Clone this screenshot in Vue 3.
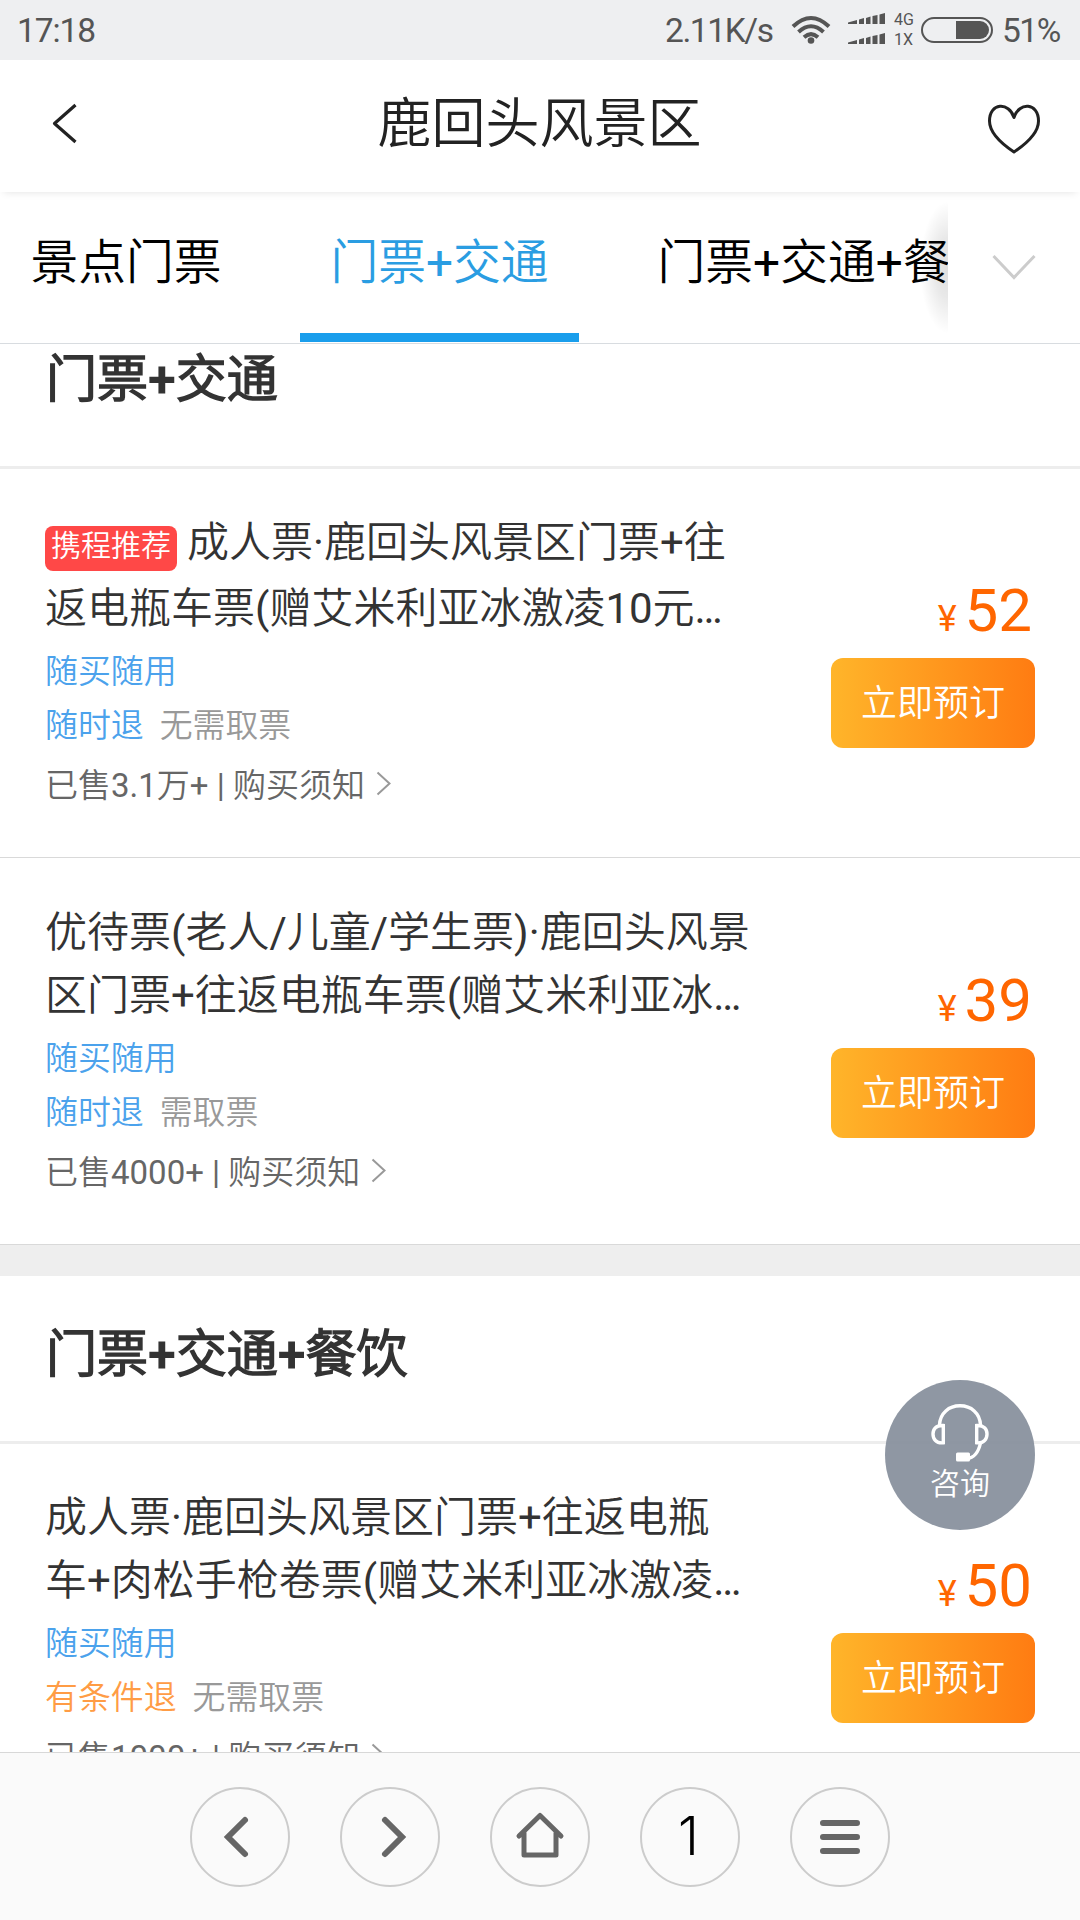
<script setup>
const tabs = [
  { label: '景点门票', active: false },
  { label: '门票+交通', active: true },
  { label: '门票+交通+餐饮', active: false },
]

const sections = [
  {
    title: '门票+交通',
    items: [
      {
        badge: '携程推荐',
        lines: ['成人票·鹿回头风景区门票+往', '返电瓶车票(赠艾米利亚冰激凌10元…'],
        refund: '随时退',
        conditional: false,
        pickup: '无需取票',
        sold: '已售3.1万+',
        price: 52,
      },
      {
        lines: ['优待票(老人/儿童/学生票)·鹿回头风景', '区门票+往返电瓶车票(赠艾米利亚冰…'],
        refund: '随时退',
        conditional: false,
        pickup: '需取票',
        sold: '已售4000+',
        price: 39,
      },
    ],
  },
  {
    title: '门票+交通+餐饮',
    items: [
      {
        lines: ['成人票·鹿回头风景区门票+往返电瓶', '车+肉松手枪卷票(赠艾米利亚冰激凌…'],
        refund: '有条件退',
        conditional: true,
        pickup: '无需取票',
        sold: '已售1000+',
        price: 50,
      },
    ],
  },
]
</script>

<template>
  <div class="screen">
    <div class="status">
      <span class="clock">17:18</span>
      <span class="speed">2.11K/s</span>
      <svg class="wifi" width="40" height="30" viewBox="0 0 40 30" fill="none" stroke="#555" stroke-width="4">
        <path d="M2 11.5Q20-5.5 38 11.5" />
        <path d="M7.5 17Q20 5.5 32.500 17" />
        <path d="M13 22.200Q20 16 27 22.200" />
        <circle cx="20" cy="25.500" r="3.300" fill="#555" stroke="none" />
      </svg>
      <svg class="signal" width="38" height="34" viewBox="0 0 38 34" fill="#555">
        <path d="M0 11v-1.500L9 7v4zM11 11V6.500L16 5v6zM18 11V5l4.500-1.500V11zM24.500 11V3L29.500 2v9zM31.500 11V1.500L37 0v11z" />
        <path transform="translate(0 20)" d="M0 11v-1.500L9 7v4zM11 11V6.500L16 5v6zM18 11V5l4.500-1.500V11zM24.500 11V3L29.500 2v9zM31.500 11V1.500L37 0v11z" />
      </svg>
      <div class="net"><span>4G</span><span>1X</span></div>
      <svg width="72" height="26" viewBox="0 0 72 26">
        <rect x="1" y="1" width="70" height="24" rx="12" fill="none" stroke="#555" stroke-width="2" />
        <path d="M35 4h24a9 9 0 0 1 0 18H35z" fill="#555" />
      </svg>
      <span class="percent">51%</span>
    </div>

    <header class="header">
      <svg class="back" width="26" height="42" viewBox="0 0 26 42" fill="none" stroke="#222" stroke-width="3.200" stroke-linejoin="round">
        <path d="M24.500 2L3.500 20.500L24.500 39" />
      </svg>
      <h1>鹿回头风景区</h1>
      <svg class="heart" width="54" height="50" viewBox="0 0 54 50" fill="none" stroke="#222" stroke-width="3" stroke-linejoin="round">
        <path d="M27 13.500C22-2.500 2.500-1.500 2.500 17C2.500 29 15 40 27 48C39 40 51.500 29 51.500 17C51.500-1.500 32-2.500 27 13.500Z" />
      </svg>
    </header>

    <nav class="tabs">
      <div class="tab-track">
        <div v-for="t in tabs" :key="t.label" class="tab" :class="{ active: t.active }">{{ t.label }}</div>
      </div>
      <div class="more">
        <svg width="44" height="28" viewBox="0 0 44 28" fill="none" stroke="#ccc" stroke-width="3">
          <path d="M1.500 2L22 23.500L42.500 2" />
        </svg>
      </div>
    </nav>

    <main class="scroller">
      <section v-for="s in sections" :key="s.title" class="section">
        <h2>{{ s.title }}</h2>
        <article v-for="item in s.items" :key="item.price" class="item" :class="{ tall: item.badge }">
          <div class="info">
            <p class="line">
              <span v-if="item.badge" class="badge">{{ item.badge }}</span><span>{{ item.lines[0] }}</span>
            </p>
            <p class="line">{{ item.lines[1] }}</p>
            <div class="facts">
              <div class="tags"><span class="blue">随买随用</span></div>
              <div class="tags">
                <span :class="item.conditional ? 'orange' : 'blue'">{{ item.refund }}</span>
                <span class="gray">{{ item.pickup }}</span>
              </div>
            </div>
            <div class="sold">
              <span>{{ item.sold }} | 购买须知</span>
              <svg width="16" height="25" viewBox="0 0 16 25" fill="none" stroke="#999" stroke-width="2">
                <path d="M1.500 1.500L13.500 12.500L1.500 23.500" />
              </svg>
            </div>
          </div>
          <div class="buy">
            <div class="price"><span class="yen">¥</span><span>{{ item.price }}</span></div>
            <button class="book">立即预订</button>
          </div>
        </article>
      </section>
    </main>

    <div class="fab">
      <svg width="58" height="58" viewBox="0 0 58 58" fill="none" stroke="#fff" stroke-width="3.400">
        <path d="M8.500 21C9 9 18 1.800 29 1.800S49 9 49.500 21" />
        <path d="M12.300 21.500v17.300C5 39.500 2 35 2 30S5 21 12.300 21.500Z" />
        <path d="M45.700 21.500v17.300C53 39.500 56 35 56 30S53 21 45.700 21.500Z" />
        <path d="M49.500 39C47.500 48 43 54 36 54.500" />
        <rect x="25" y="48.500" width="14" height="9" rx="1.500" fill="#fff" stroke="none" />
      </svg>
      <span>咨询</span>
    </div>

    <footer class="toolbar">
      <div class="circle">
        <svg width="100" height="100" viewBox="0 0 100 100" fill="none" stroke="#666" stroke-width="6" stroke-linecap="round">
          <path d="M55 33L38 50L55 67" />
        </svg>
      </div>
      <div class="circle">
        <svg width="100" height="100" viewBox="0 0 100 100" fill="none" stroke="#666" stroke-width="6" stroke-linecap="round">
          <path d="M45 33L62 50L45 67" />
        </svg>
      </div>
      <div class="circle">
        <svg width="100" height="100" viewBox="0 0 100 100" fill="none" stroke="#666" stroke-width="5" stroke-linecap="round" stroke-linejoin="round">
          <path d="M29 49L50 28.500L71 49M34 46V68H66V46" />
        </svg>
      </div>
      <div class="circle"><span class="count">1</span></div>
      <div class="circle">
        <svg width="100" height="100" viewBox="0 0 100 100" fill="none" stroke="#666" stroke-width="6" stroke-linecap="round">
          <path d="M33 36H67M33 50H67M33 64H67" />
        </svg>
      </div>
    </footer>
  </div>
</template>

<style>
body {
  margin: 0;
}
</style>

<style scoped>
.screen {
  position: relative;
  display: flex;
  flex-direction: column;
  width: 1080px;
  height: 1920px;
  overflow: hidden;
  background: #fff;
  color: #333;
  font-family: Roboto, "Noto Sans CJK SC DemiLight", "Noto Sans CJK SC", sans-serif;
  font-weight: 400;
}
.screen * {
  box-sizing: border-box;
}
svg {
  display: block;
  flex: none;
}
h1,
h2,
p {
  margin: 0;
}

.status {
  display: flex;
  flex: none;
  align-items: center;
  height: 60px;
  padding: 0 17px;
  background: #eeeff1;
  color: #555;
  font-size: 33.500px;
  font-weight: 400;
  white-space: nowrap;
}
.clock {
  flex: 1;
  letter-spacing: -1.100px;
}
.speed {
  width: 110px;
  margin-right: 16px;
  letter-spacing: -1.400px;
}
.wifi {
  margin-right: 17px;
}
.signal {
  margin-right: 8px;
}
.net {
  display: flex;
  flex-direction: column;
  width: 25px;
  margin-right: 2px;
  font-size: 16px;
  line-height: 20px;
}
.percent {
  width: 61px;
  margin-left: 9px;
  letter-spacing: -1.500px;
}

.header {
  position: relative;
  z-index: 1;
  display: flex;
  flex: none;
  align-items: center;
  justify-content: space-between;
  height: 132px;
  padding: 0 39px 0 51px;
  box-shadow: 0 4px 8px -4px rgba(0, 0, 0, 0.12);
}
.back {
  margin-bottom: 4px;
}
.heart {
  margin-top: 5px;
}
.header h1 {
  margin-left: 15px;
  padding-bottom: 14px;
  color: #222;
  font-size: 54px;
  font-weight: 400;
}

.tabs {
  display: flex;
  flex: none;
  height: 152px;
  border-bottom: 1px solid #d8dce0;
}
.tab-track {
  display: flex;
  flex: 1;
  gap: 48px;
  min-width: 0;
  overflow: hidden;
}
.tab {
  flex: none;
  height: 150px;
  padding: 0 30.500px;
  color: #000;
  font-size: 47.750px;
  line-height: 143px;
  white-space: nowrap;
}
.tab.active {
  border-bottom: 9px solid #1a9eec;
  color: #2a9de2;
}
.more {
  position: relative;
  display: flex;
  align-items: center;
  justify-content: center;
  width: 132px;
  background: #fff;
}
.more::before {
  content: "";
  position: absolute;
  top: 8px;
  bottom: 8px;
  left: -30px;
  width: 30px;
  background: radial-gradient(ellipse 28px 66px at 100% 50%, rgba(0, 0, 0, 0.13), rgba(0, 0, 0, 0.09) 45%, rgba(0, 0, 0, 0));
}

.scroller {
  flex: 1;
  min-height: 0;
  overflow: hidden;
}
.section + .section {
  border-top: 31px solid #eee;
}
.section:first-child {
  margin-top: -43px;
}
h2 {
  height: 168px;
  padding: 0 46px;
  border-bottom: 3px solid #ededed;
  font-size: 51px;
  font-weight: 700;
  line-height: 157px;
}
.item {
  display: flex;
  justify-content: space-between;
  height: 387px;
  padding: 38px 45px 0;
  border-bottom: 1px solid #d9d9d9;
}
.item.tall {
  height: 389px;
}
.item + .item {
  padding-top: 39px;
}
.info {
  min-width: 0;
}
.line {
  display: flex;
  align-items: center;
  height: 63px;
  font-size: 42px;
  white-space: nowrap;
}
.tall .line:first-child {
  height: 66px;
}
.badge {
  height: 45px;
  margin: 17px 10px 0 0;
  padding: 0 6px;
  border-radius: 8px;
  background: #ff4847;
  color: #fff;
  font-size: 30px;
  line-height: 39px;
}
.badge + span {
  padding-bottom: 4px;
}
.facts {
  margin-top: 6px;
}
.tags {
  display: flex;
  gap: 16px;
  height: 54px;
  font-size: 32.900px;
  line-height: 60px;
}
.blue {
  color: #4ba2ec;
}
.orange {
  color: #ff9c45;
}
.gray {
  color: #999;
}
.sold {
  display: flex;
  align-items: center;
  gap: 11px;
  height: 66px;
  color: #666;
  font-size: 33px;
}
.buy {
  display: flex;
  flex-direction: column;
  align-items: flex-end;
  padding-top: 61px;
}
.price {
  display: flex;
  align-items: baseline;
  gap: 8px;
  height: 90px;
  padding-right: 3px;
  color: #ff6600;
  font-size: 60px;
  font-weight: 400;
  line-height: 86px;
}
.yen {
  font-size: 36px;
}
.book {
  width: 204px;
  height: 90px;
  padding: 0 0 6px;
  border: 0;
  border-radius: 12px;
  background: linear-gradient(90deg, #ffb52a, #ff7c12);
  color: #fff;
  font: inherit;
  font-size: 36px;
}

.fab {
  position: absolute;
  top: 1380px;
  right: 45px;
  display: flex;
  flex-direction: column;
  align-items: center;
  width: 150px;
  height: 150px;
  padding-top: 24px;
  border-radius: 50%;
  background: rgba(134, 142, 155, 0.92);
  color: #fff;
  font-size: 30px;
  line-height: 44px;
}

.toolbar {
  display: flex;
  flex: none;
  align-items: center;
  justify-content: center;
  gap: 50px;
  height: 168px;
  border-top: 1px solid #d8d8d8;
  background: #fafafa;
}
.circle {
  display: flex;
  align-items: center;
  justify-content: center;
  width: 100px;
  height: 100px;
  border: 2px solid #ccc;
  border-radius: 50%;
}
.count {
  padding: 0 3px 2px 0;
  color: #000;
  font-family: Inter, sans-serif;
  font-size: 53px;
  font-weight: 300;
}
</style>
